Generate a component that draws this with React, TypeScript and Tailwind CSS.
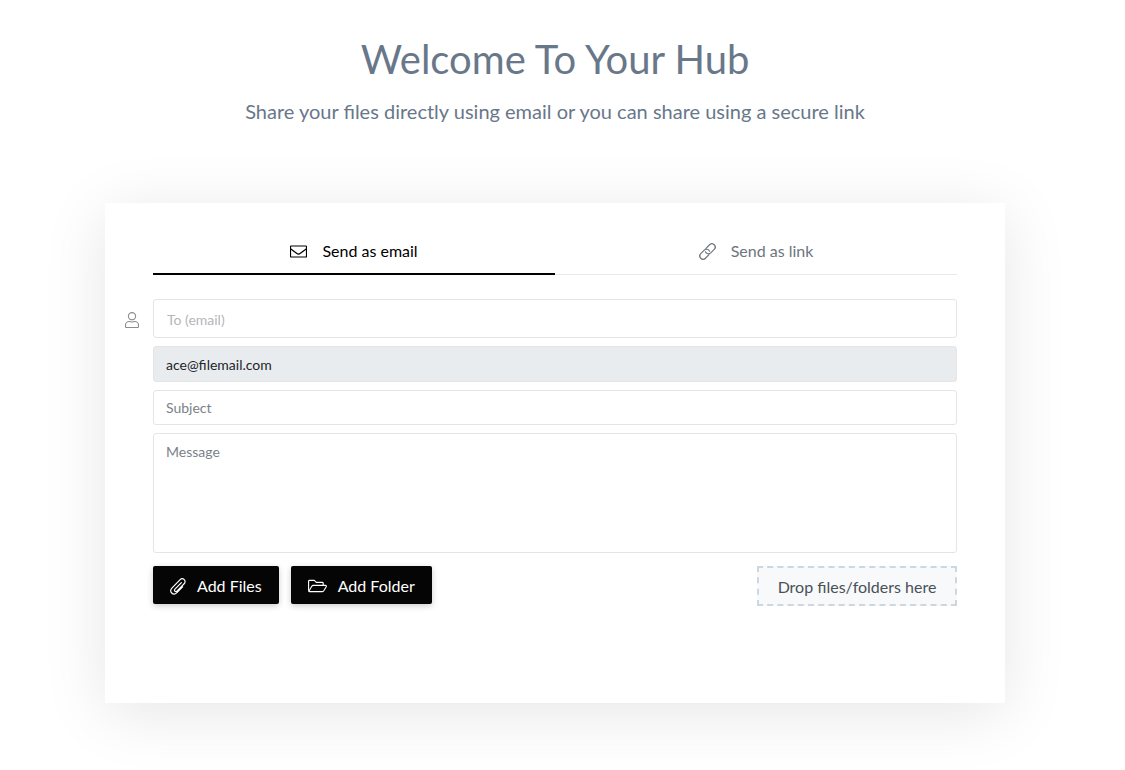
import React from 'react';

interface IconProps {
    className?: string;
}

const EnvelopeIcon = ({ className }: IconProps) => (
    <svg className={className} viewBox="0 0 17 16" fill="none" stroke="currentColor" strokeWidth="1.2" aria-hidden="true">
        <rect x="0.5" y="2.5" width="16" height="11" rx="0.6" />
        <path d="M0.5 5.2L6.6 9.8C7.8 10.7 9.2 10.7 10.4 9.8L16.5 5.2" />
    </svg>
);

const LinkIcon = ({ className }: IconProps) => (
    <svg className={className} viewBox="0 0 17 17" fill="none" stroke="currentColor" strokeWidth="1.2" strokeLinecap="round" aria-hidden="true">
        <g transform="translate(8.5 8.5) rotate(-45)">
            <path d="M-1.2 3.3H-6.2A3.3 3.3 0 0 1 -6.2 -3.3H-1.3A3.3 3.3 0 0 1 1.7 1.2" />
            <path d="M1.2 -3.3H6.2A3.3 3.3 0 0 1 6.2 3.3H1.3A3.3 3.3 0 0 1 -1.7 -1.2" />
        </g>
    </svg>
);

const UserIcon = ({ className }: IconProps) => (
    <svg className={className} viewBox="0 0 14 16" fill="none" stroke="currentColor" strokeWidth="1.1" aria-hidden="true">
        <circle cx="7" cy="4.2" r="3.6" />
        <path d="M4.2 9.5C5.2 9.5 5.7 10 7 10C8.3 10 8.8 9.5 9.8 9.5C11.8 9.5 13.5 11.2 13.5 13.2V14.5C13.5 15 13 15.5 12.5 15.5H1.5C1 15.5 0.5 15 0.5 14.5V13.2C0.5 11.2 2.2 9.5 4.2 9.5Z" />
    </svg>
);

const PaperclipIcon = ({ className }: IconProps) => (
    <svg className={className} viewBox="0 0 16 17" fill="none" stroke="currentColor" strokeWidth="1.2" strokeLinecap="round" aria-hidden="true">
        <path d="M11.4 4.6L5 11.2C4.3 11.9 4.3 12.7 4.9 13.2C5.5 13.8 6.3 13.7 6.9 13.1L13.9 6C15.4 4.5 15.4 2.8 14.2 1.6C13 0.5 11.3 0.5 9.9 1.9L2.1 9.8C0.3 11.6 0.3 13.6 1.7 15C3.1 16.4 5.2 16.4 6.9 14.7L12.6 8.9" />
    </svg>
);

const FolderIcon = ({ className }: IconProps) => (
    <svg className={className} viewBox="0 0 19 16" fill="none" stroke="currentColor" strokeWidth="1.1" strokeLinejoin="round" aria-hidden="true">
        <path d="M0.6 12.8V3.2C0.6 2.7 1 2.4 1.5 2.4H6.3L8.3 4.4H14.2C14.7 4.4 15.2 4.8 15.2 5.3V7.4" />
        <path d="M0.8 13.2L3.8 8.2C4.1 7.7 4.5 7.4 5.1 7.4H17.4C18.3 7.4 18.6 8.1 18.2 8.8L15.8 12.8C15.5 13.3 15.1 13.6 14.5 13.6H1.4C0.9 13.6 0.6 13.3 0.6 12.8" />
    </svg>
);

const tabs = [
    { label: 'Send as email', icon: EnvelopeIcon, active: true },
    { label: 'Send as link', icon: LinkIcon, active: false },
];

const actions = [
    { label: 'Add Files', icon: PaperclipIcon, iconClass: 'w-4 h-[17px]' },
    { label: 'Add Folder', icon: FolderIcon, iconClass: 'w-[19px] h-4' },
];

const App = () => {
    return (
        <main className="bg-white pl-4 pr-[31px] pt-[35px] pb-16 font-['Lato',sans-serif]">
            <header className="text-center text-[#687789]">
                <h1 className="text-[40px] leading-12">Welcome To Your Hub</h1>
                <p className="mt-3 text-[20px] leading-8">Share your files directly using email or you can share using a secure link</p>
            </header>

            <section className="max-w-[900px] min-h-[500px] mx-auto mt-[76px] px-12 pt-6 pb-24 bg-white shadow-[0_10px_60px_rgba(0,0,0,0.1)]">
                <div role="tablist" className="flex border-b border-[#e9e9e9]">
                    {tabs.map((tab) => (
                        <button
                            key={tab.label}
                            type="button"
                            role="tab"
                            aria-selected={tab.active}
                            className={`flex flex-1 items-center justify-center gap-[15px] h-12 pt-0.5 -mb-px border-b-2 text-[16px] ${tab.active ? 'border-black text-black' : 'border-transparent text-[#6c757d]'}`}
                        >
                            <tab.icon className="w-[17px] h-[17px]" />
                            {tab.label}
                        </button>
                    ))}
                </div>

                <form className="mt-6">
                    <div className="relative">
                        <label htmlFor="to" aria-label="To" className="absolute right-full top-[13px] mr-[14px] text-[#8c8c8c]">
                            <UserIcon className="w-[14px] h-4" />
                        </label>
                        <input
                            id="to"
                            type="email"
                            placeholder="To (email)"
                            className="block w-full h-[39px] px-[13px] pt-0.5 border border-[#e5e5e5] rounded-[3px] text-[14px] placeholder:text-[#b3b6ba]"
                        />
                    </div>
                    <input
                        type="email"
                        aria-label="From"
                        defaultValue="ace@filemail.com"
                        readOnly
                        className="block w-full h-9 mt-2 px-3 border border-[#e5e5e5] rounded-[3px] bg-[#e9ecef] text-[14px] text-[#212529]"
                    />
                    <input
                        type="text"
                        aria-label="Subject"
                        placeholder="Subject"
                        className="block w-full h-[35px] mt-2 px-3 border border-[#e5e5e5] rounded-[3px] text-[14px] placeholder:text-[#7b818a]"
                    />
                    <textarea
                        aria-label="Message"
                        placeholder="Message"
                        className="block w-full h-[120px] mt-2 px-3 py-2 border border-[#e5e5e5] rounded-[3px] resize-none text-[14px] leading-5 placeholder:text-[#7b818a]"
                    />

                    <div className="flex flex-wrap items-start gap-3 mt-[13px]">
                        {actions.map((action) => (
                            <button
                                key={action.label}
                                type="button"
                                className="flex items-center gap-[11px] h-[38px] px-[17px] pt-0.5 rounded-xs bg-[#050505] text-[16px] text-white shadow-[0_2px_6px_rgba(0,0,0,0.2)]"
                            >
                                <action.icon className={action.iconClass} />
                                {action.label}
                            </button>
                        ))}
                        <div className="flex items-center justify-center w-[200px] h-10 ml-auto pt-0.5 border-2 border-dashed border-[#ccd7df] bg-[#f8f9fb] text-[16px] text-[#495057]">
                            Drop files/folders here
                        </div>
                    </div>
                </form>
            </section>
        </main>
    );
};

export default App;
